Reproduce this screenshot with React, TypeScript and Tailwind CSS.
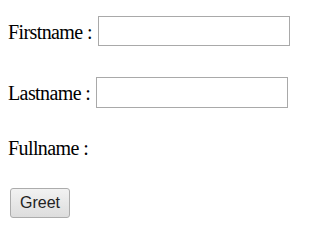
import React, { useState } from "react";

export default function App() {
  const [first, setFirst] = useState("");
  const [last, setLast] = useState("");
  return (
    <div className="w-[320px] h-[250px] bg-white pl-2 pt-4 text-black">
      <div className="flex items-end h-[30px] font-['Liberation_Serif',serif] text-[20px] leading-[1.2]">
        <span className="mb-[2px] tracking-[-0.6px]">Firstname :</span>
        <input
          value={first}
          onChange={(e) => setFirst(e.target.value)}
          className="ml-[6px] w-[192px] h-[30px] border border-[#a9a9a9] bg-white outline-none px-1 font-['Liberation_Sans',sans-serif] text-[14px]"
        />
      </div>
      <div className="flex items-end h-[31px] mt-[31px] font-['Liberation_Serif',serif] text-[20px] leading-[1.2]">
        <span className="mb-[3px] tracking-[-0.6px]">Lastname :</span>
        <input
          value={last}
          onChange={(e) => setLast(e.target.value)}
          className="ml-[6px] w-[192px] h-[31px] border border-[#a9a9a9] bg-white outline-none px-1 font-['Liberation_Sans',sans-serif] text-[14px]"
        />
      </div>
      <div className="mt-[28px] font-['Liberation_Serif',serif] text-[20px] leading-[1.2] tracking-[-0.6px]">
        Fullname :
      </div>
      <button className="mt-[28px] ml-[2px] w-[60px] h-[30px] rounded-[3px] border border-[#acacac] bg-gradient-to-b from-[#f2f2f2] to-[#dddddd] font-['Liberation_Sans',sans-serif] text-[16px] text-[#222] flex items-center justify-center">
        Greet
      </button>
    </div>
  );
}
